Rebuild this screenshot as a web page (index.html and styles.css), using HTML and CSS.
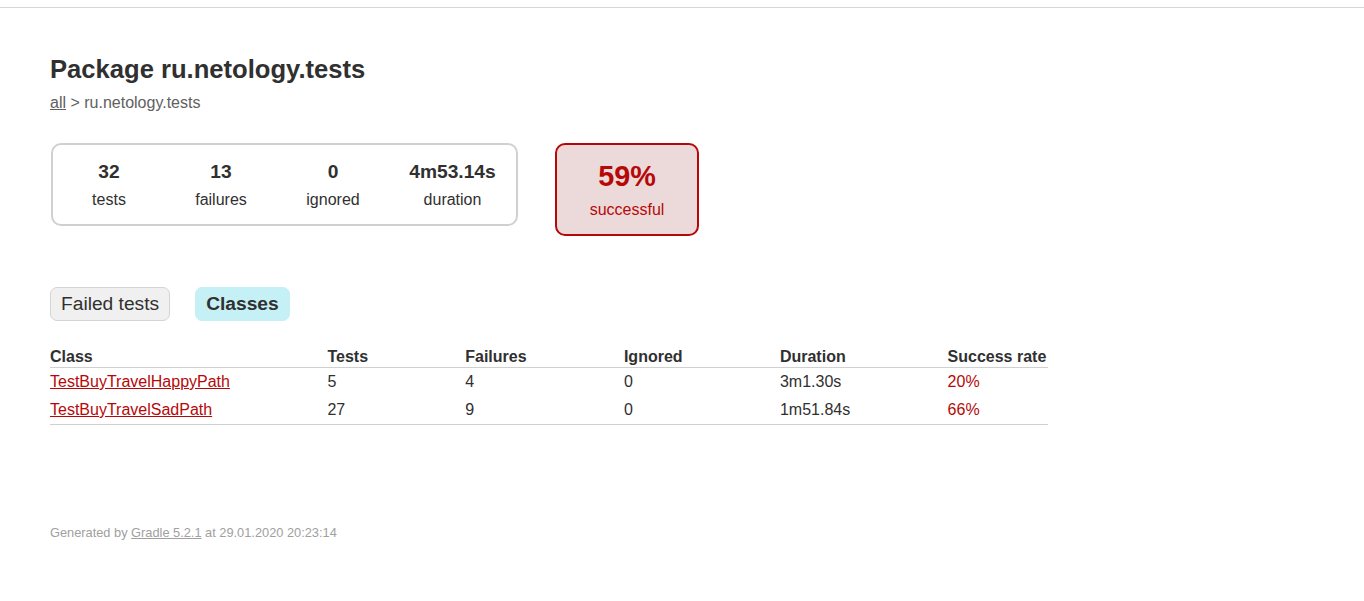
FILE: index.html
```
<!DOCTYPE html>
<html>
<head>
<meta charset="utf-8">
<title>Test results - Package ru.netology.tests</title>
<link rel="stylesheet" href="styles.css">
</head>
<body>
<div class="topbar"></div>
<div class="content">
  <h1 class="title">Package ru.netology.tests</h1>
  <div class="breadcrumbs"><a href="#">all</a> &gt; ru.netology.tests</div>

  <div class="summary">
    <div class="summary-group">
      <div class="info-box"><div class="counter">32</div><p class="label">tests</p></div>
      <div class="info-box"><div class="counter">13</div><p class="label">failures</p></div>
      <div class="info-box"><div class="counter">0</div><p class="label">ignored</p></div>
      <div class="info-box info-box-wide"><div class="counter">4m53.14s</div><p class="label">duration</p></div>
    </div>
    <div class="info-box success-rate failures">
      <div class="percent">59%</div>
      <p class="label">successful</p>
    </div>
  </div>

  <ul class="tab-links">
    <li class="tab"><a href="#">Failed tests</a></li>
    <li class="tab tab-selected"><a href="#">Classes</a></li>
  </ul>

  <div class="tab-panel">
    <table class="class-table">
      <thead>
        <tr><th>Class</th><th>Tests</th><th>Failures</th><th>Ignored</th><th>Duration</th><th>Success rate</th></tr>
      </thead>
      <tbody>
        <tr>
          <td class="failures"><a href="#">TestBuyTravelHappyPath</a></td>
          <td>5</td><td>4</td><td>0</td><td>3m1.30s</td>
          <td class="failures">20%</td>
        </tr>
        <tr>
          <td class="failures"><a href="#">TestBuyTravelSadPath</a></td>
          <td>27</td><td>9</td><td>0</td><td>1m51.84s</td>
          <td class="failures">66%</td>
        </tr>
      </tbody>
    </table>
  </div>

  <div class="footer">
    <p class="footer-text">Generated by <a href="#">Gradle 5.2.1</a> at 29.01.2020 20:23:14</p>
  </div>
</div>
</body>
</html>
```

FILE: styles.css
```
html, body {
  margin: 0;
  padding: 0;
  background: #ffffff;
}
body {
  font-family: "Liberation Sans", Arial, sans-serif;
  font-size: 16px;
  color: #303030;
}
a, a:visited {
  color: #303030;
}
.topbar {
  height: 7px;
  border-bottom: 1px solid #d6d6d6;
}
.content {
  padding: 30px 50px;
}
.title {
  font-size: 25.6px;
  font-weight: bold;
  margin: 17px 0 10px 0;
  white-space: nowrap;
}
.breadcrumbs, .breadcrumbs a {
  color: #606060;
}
.summary {
  display: flex;
  align-items: flex-start;
  margin-top: 30px;
  margin-bottom: 40px;
  padding: 1px;
}
.summary-group {
  display: flex;
  border: 2px solid #d0d0d0;
  border-radius: 10px;
}
.info-box {
  width: 110px;
  padding: 16px 0 15px 0;
  margin: 0 1px;
  text-align: center;
}
.info-box-wide {
  width: 125px;
}
.label {
  margin: 0;
}
.counter {
  font-size: 19.2px;
  font-weight: bold;
  margin-bottom: 8px;
}
.success-rate {
  width: 140px;
  padding: 15px 0;
  margin-left: 37px;
  border: 2px solid #b60808;
  border-radius: 10px;
  background-color: #ecdada;
}
.percent {
  font-size: 28.8px;
  font-weight: bold;
  margin-bottom: 8px;
}
.failures, .failures a, .failures a:visited {
  color: #b60808;
}
.tab-links {
  display: flex;
  list-style: none;
  padding: 10px 0;
  margin: 0 0 16px 0;
}
.tab {
  padding: 5px 10px;
  margin-right: 25px;
  border: 1px solid #d4d4d4;
  border-radius: 7px;
  background-color: #f0f0f0;
}
.tab a {
  font-size: 19.2px;
  text-decoration: none;
  display: block;
}
.tab-selected {
  background-color: #c5f0f5;
  border-color: #c5f0f5;
}
.tab-selected a {
  font-weight: bold;
}
.class-table {
  width: 998px;
  border-collapse: collapse;
  border-bottom: 1px solid #d0d0d0;
}
.class-table th {
  text-align: left;
  white-space: nowrap;
  padding: 1px 0 1px 6em;
  border-bottom: 1px solid #d0d0d0;
}
.class-table td {
  white-space: nowrap;
  padding: 5px 0 5px 6em;
}
.class-table th:first-child,
.class-table td:first-child {
  padding-left: 0;
}
.footer {
  margin-top: 100px;
  font-size: 12.8px;
  white-space: nowrap;
}
.footer-text {
  margin: 0 0 12.8px 0;
}
.footer, .footer a, .footer a:visited {
  color: #a0a0a0;
}
```
